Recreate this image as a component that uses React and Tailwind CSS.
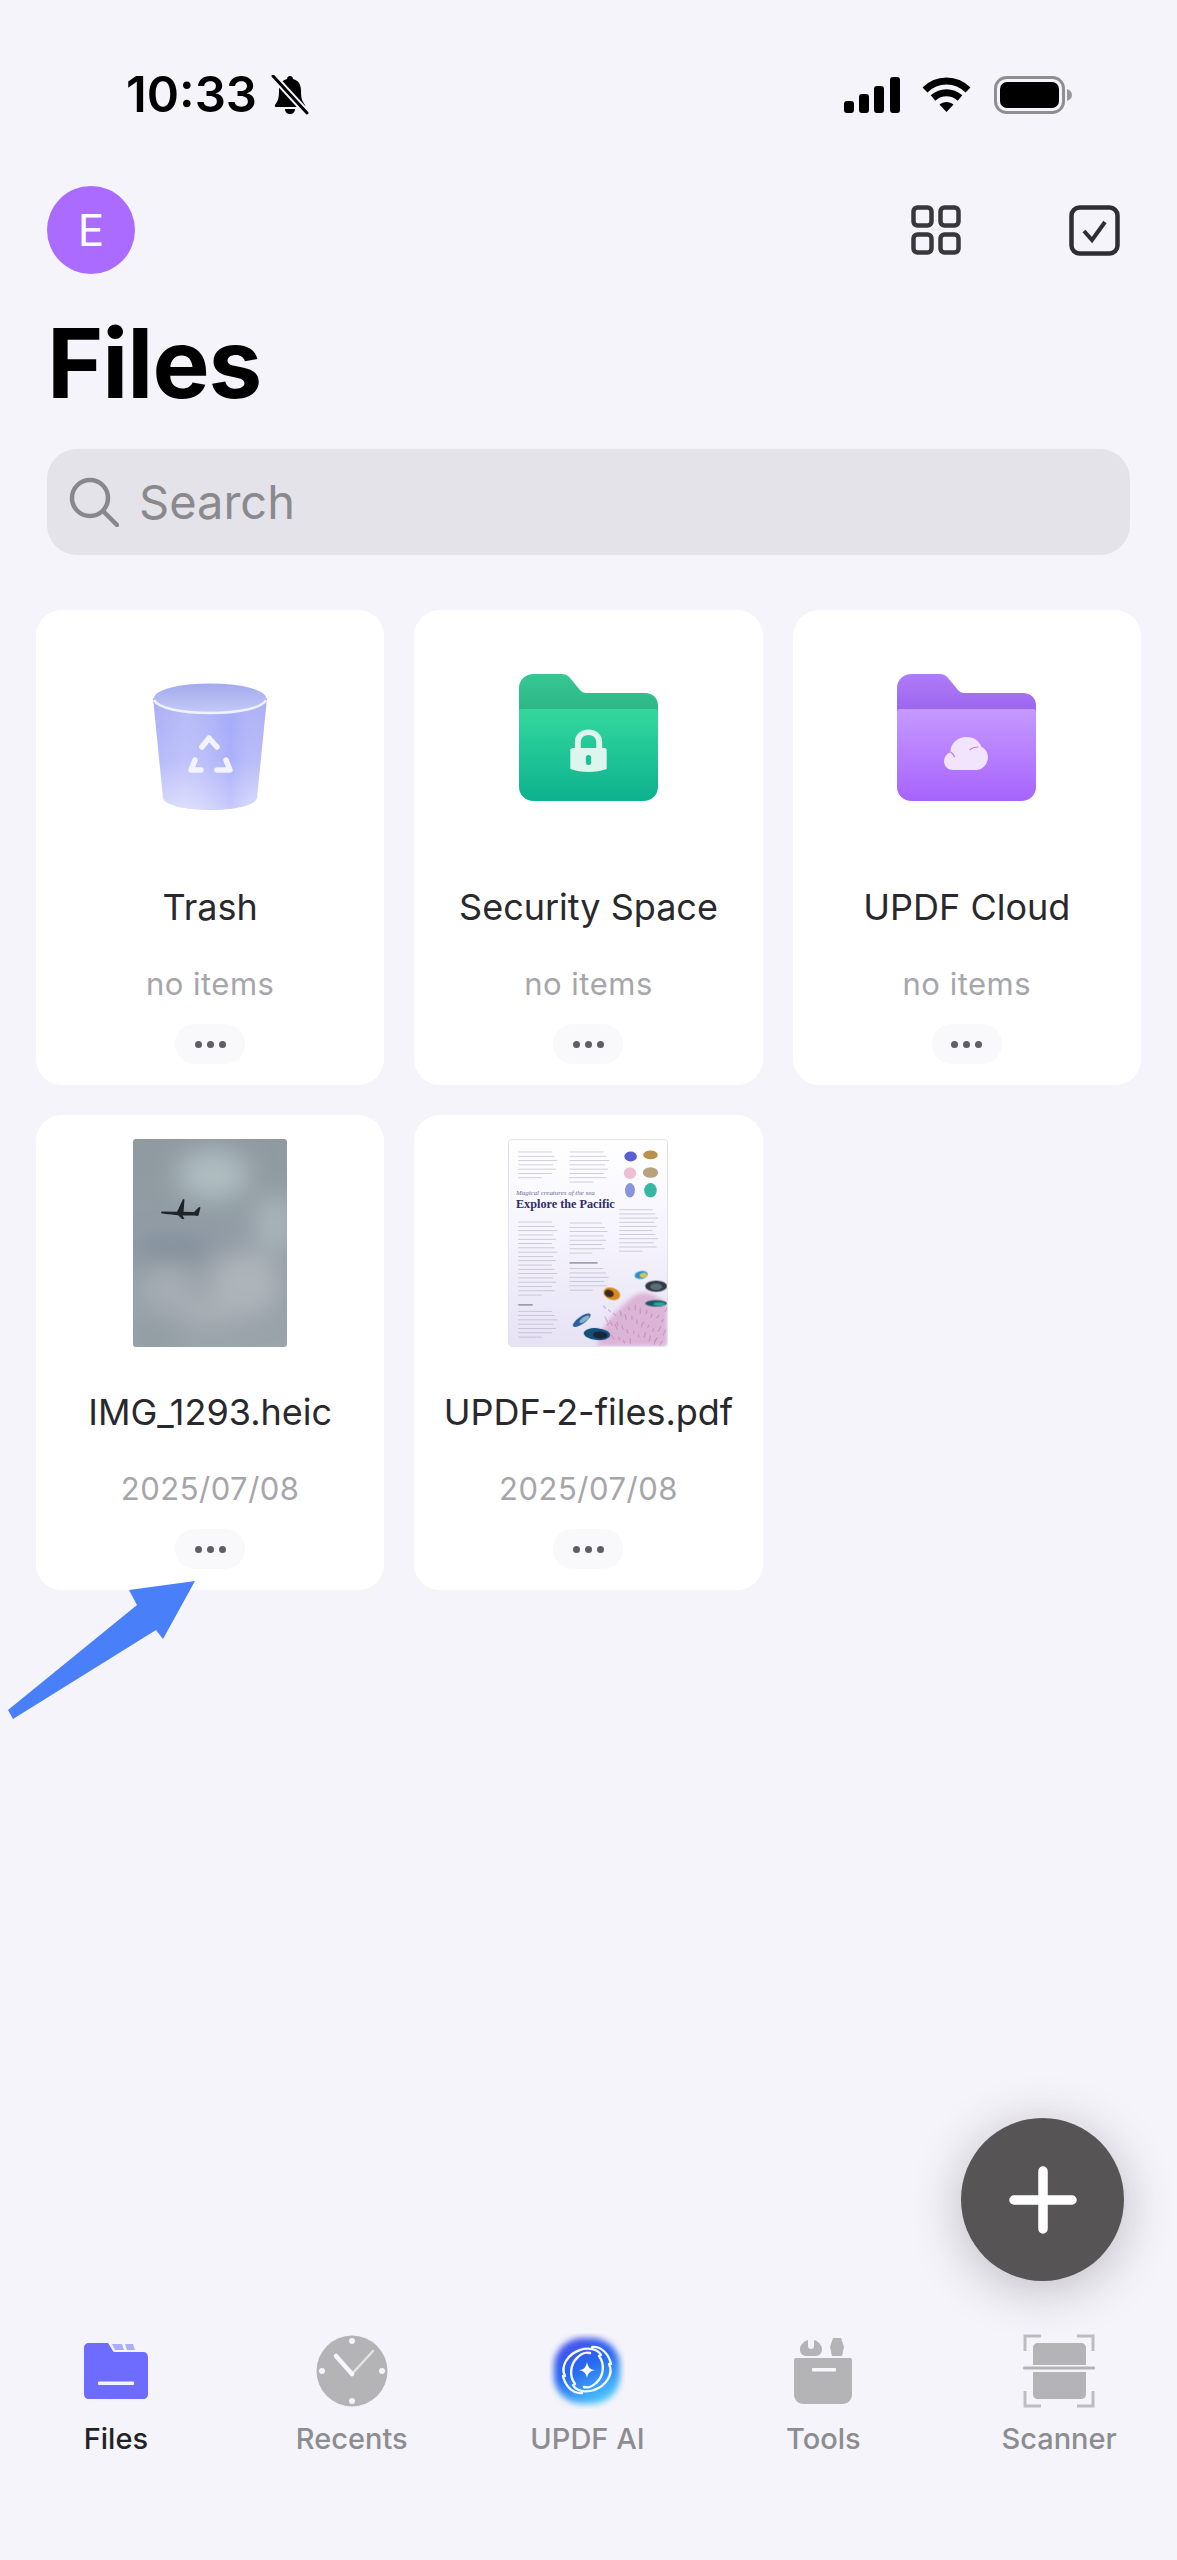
import React from 'react';

function lines(x, y, w, n, gap) {
  return [...Array(n)].map((_, i) => (
    <rect key={`${x}-${y}-${i}`} x={x} y={y + i * gap} width={i === n - 1 ? w * 0.6 : w * (0.86 + ((i * 7) % 5) * 0.035)} height="2.200" fill="#9a9ab2" opacity="0.6" />
  ));
}

function StatusBar() {
  return (
    <div className="flex items-center justify-between h-[40px] mt-[75px] pl-[126px] pr-[105px]">
      <div className="flex items-center gap-[13px]">
        <span className="text-[49px] leading-[40px] font-semibold text-black">10:33</span>
        <svg width="40" height="40" viewBox="0 0 40 40">
          <path d="M20 1c2 0 3 1.500 3 3 6 1.500 8 6 8 12 0 7 1 10 4 14 .6 1 0 2-1 2H6c-1 0-1.600-1-1-2 3-4 4-7 4-14 0-6 2-10.500 8-12 0-1.500 1-3 3-3z" fill="#000" />
          <path d="M15 34h10c0 3-2 5-5 5s-5-2-5-5z" fill="#000" />
          <path d="M3 1l34 37" stroke="#f5f4fa" strokeWidth="7" />
          <path d="M3 1l34 37" stroke="#000" strokeWidth="3" strokeLinecap="round" />
        </svg>
      </div>
      <div className="flex items-center">
        <svg width="56" height="36" viewBox="0 0 56 36" fill="#000">
          <rect x="0" y="24" width="10" height="12" rx="3" />
          <rect x="15" y="17" width="10" height="19" rx="3" />
          <rect x="30" y="9" width="10" height="27" rx="3" />
          <rect x="46" y="0" width="10" height="36" rx="3" />
        </svg>
        <svg className="ml-[22px]" width="49" height="36" viewBox="0 0 49 36" fill="none" stroke="#000" strokeWidth="7">
          <path d="M3 13C15 1 34 1 46 13" />
          <path d="M11 21c8-7 19-7 27 0" />
          <path d="M24.500 35l-7-7.500c4-3.500 10-3.500 14 0z" fill="#000" stroke="none" />
        </svg>
        <svg className="ml-[23px]" width="78" height="38" viewBox="0 0 78 38">
          <rect x="1.500" y="1.500" width="68" height="35" rx="11" fill="none" stroke="#8f8f92" strokeWidth="3" />
          <rect x="6" y="6" width="59" height="26" rx="7" fill="#000" />
          <path d="M73 13c3 1 5 3 5 6s-2 5-5 6z" fill="#98989b" />
        </svg>
      </div>
    </div>
  );
}

function TrashIcon() {
  return (
    <svg width="116" height="128" viewBox="0 0 116 128">
      <defs>
        <linearGradient id="tb" x1="0" y1="0" x2="0" y2="1">
          <stop offset="0" stopColor="#a9aef6" />
          <stop offset="0.55" stopColor="#b5b9f8" />
          <stop offset="1" stopColor="#d8dafb" />
        </linearGradient>
        <linearGradient id="ts" x1="0" y1="0" x2="1" y2="0">
          <stop offset="0" stopColor="#ffffff" stopOpacity="0" />
          <stop offset="0.28" stopColor="#ffffff" stopOpacity="0.14" />
          <stop offset="0.68" stopColor="#8f97ff" stopOpacity="0.25" />
          <stop offset="1" stopColor="#ffffff" stopOpacity="0" />
        </linearGradient>
        <linearGradient id="tr" x1="0" y1="0" x2="0" y2="1">
          <stop offset="0" stopColor="#a3aaee" />
          <stop offset="1" stopColor="#c3c9f6" />
        </linearGradient>
      </defs>
      <path d="M1 16l10 100c1 7 22 12 47 12s46-5 47-12l10-100z" fill="url(#tb)" />
      <path d="M1 16l10 100c1 7 22 12 47 12s46-5 47-12l10-100z" fill="url(#ts)" />
      <ellipse cx="58" cy="16" rx="56" ry="14.500" fill="url(#tr)" />
      <path d="M2 18c4 8 27 13 56 13s52-5 56-13" fill="none" stroke="#f0f1fe" strokeWidth="2.500" />
      <g fill="none" stroke="#f2f3ff" strokeWidth="5.500" strokeLinecap="round" strokeLinejoin="round">
        <path d="M50 65l7-9 8 9" />
        <path d="M43 78l-4 10h10" />
        <path d="M74 78l4 10H65" />
      </g>
    </svg>
  );
}

function Folder({ back1, back2, front1, front2, id, children }) {
  return (
    <svg width="139" height="127" viewBox="0 0 130 127" preserveAspectRatio="none">
      <defs>
        <linearGradient id={`${id}b`} x1="0" y1="0" x2="0" y2="1">
          <stop offset="0" stopColor={back1} />
          <stop offset="1" stopColor={back2} />
        </linearGradient>
        <linearGradient id={`${id}f`} x1="0" y1="0" x2="0" y2="1">
          <stop offset="0" stopColor={front1} />
          <stop offset="1" stopColor={front2} />
        </linearGradient>
      </defs>
      <path d="M0 14C0 6 6 0 14 0h26c3 0 5 1 7 3l10 13c2 2 3 3 6 3h55c7 0 12 5 12 12v10H0z" fill={`url(#${id}b)`} />
      <path d="M0 38c0-2 1-3 3-3h124c2 0 3 1 3 3v75c0 8-6 14-14 14H14c-8 0-14-6-14-14z" fill={`url(#${id}f)`} />
      {children}
    </svg>
  );
}

function SecurityIcon() {
  return (
    <Folder id="sec" back1="#37c793" back2="#2cb585" front1="#34d89d" front2="#0cb18e">
      <path d="M55 76V68c0-13 20-13 20 0v8" fill="none" stroke="#dcf6ee" strokeWidth="5.500" />
      <path d="M48 76c0-1 1-2 2-2h30c1 0 2 1 2 2v19c-10 4-24 4-34 0z" fill="#dcf6ee" />
      <rect x="62.500" y="81" width="5" height="10" rx="2.500" fill="#1fc095" />
    </Folder>
  );
}

function CloudIcon() {
  return (
    <Folder id="cld" back1="#af7cf8" back2="#9963ec" front1="#c59aff" front2="#a763fd">
      <path d="M53 96c-6 0-9-4-9-9 0-4 2-7 6-9 0-9 7-15 15-15 7 0 12 4 14 10 4 2 6 6 6 10 0 7-5 13-11 13z" fill="#f2e4fd" />
      <path d="M50 78c2 1 3 3 4 5M68 76c2-2 5-3 8-3" fill="none" stroke="#b37df8" strokeWidth="1.200" />
    </Folder>
  );
}

function PhotoThumb() {
  return (
    <svg className="rounded-[3px]" width="154" height="208" viewBox="0 0 154 208">
      <defs>
        <linearGradient id="sky" x1="0" y1="0" x2="0" y2="1">
          <stop offset="0" stopColor="#8f9b9f" />
          <stop offset="0.5" stopColor="#919ca6" />
          <stop offset="1" stopColor="#9aa4aa" />
        </linearGradient>
        <filter id="soft" x="-30%" y="-30%" width="160%" height="160%">
          <feGaussianBlur stdDeviation="12" />
        </filter>
      </defs>
      <rect width="154" height="208" fill="url(#sky)" />
      <g filter="url(#soft)">
        <ellipse cx="80" cy="36" rx="36" ry="26" fill="#afbcc0" />
        <ellipse cx="142" cy="85" rx="22" ry="30" fill="#a8b3b9" />
        <ellipse cx="40" cy="110" rx="40" ry="10" fill="#808c98" />
        <ellipse cx="112" cy="145" rx="36" ry="32" fill="#aeb5ba" />
        <ellipse cx="35" cy="150" rx="28" ry="22" fill="#a6aeb4" />
        <ellipse cx="75" cy="174" rx="32" ry="12" fill="#abb2b7" />
        <ellipse cx="20" cy="198" rx="28" ry="10" fill="#8f99a1" />
      </g>
      <g fill="#1f2429">
        <path d="M28 73.500c0-.8 1-1 2-1l31 .5 5-5 1.500.5-2 8c-1 .5-2 .5-4 0-10 .5-24-.8-32-2-1 0-1.500-.5-1.500-1z" />
        <path d="M44 73l6-13 1.500.5-1 13zM44 75l5 5h2.500l-3-5.500z" />
      </g>
    </svg>
  );
}

const CORALS = [
  { x: 605, y: 105, rx: 19, ry: 15, fill: '#5a5fd0' },
  { x: 665, y: 100, rx: 22, ry: 13, fill: '#b8924a' },
  { x: 603, y: 155, rx: 19, ry: 18, fill: '#ebc0d5' },
  { x: 665, y: 153, rx: 23, ry: 16, fill: '#b7a27c' },
  { x: 603, y: 207, rx: 15, ry: 22, fill: '#8a94dc' },
  { x: 665, y: 207, rx: 19, ry: 22, fill: '#35b8a3' },
];
const FISH = [
  { x: 637, y: 463, rx: 20, ry: 12, a: '#2f8fc4', b: '#d5c64a', r: -10, dx: 6 },
  { x: 682, y: 497, rx: 33, ry: 17, a: '#2f3a46', b: '#5d6c75', r: 0, dx: 0 },
  { x: 682, y: 549, rx: 33, ry: 10, a: '#1f5a63', b: '#2aa49c', r: 0, dx: 10 },
  { x: 548, y: 520, rx: 26, ry: 18, a: '#d88a1f', b: '#3a2a20', r: 20, dx: -8 },
  { x: 457, y: 600, rx: 32, ry: 11, a: '#2a5f9a', b: '#8cb3d0', r: -35, dx: 8 },
  { x: 503, y: 642, rx: 40, ry: 18, a: '#134f7a', b: '#16283a', r: 5, dx: 10 },
];
const CORAL_STROKES = [...Array(40)].map((_, i) => {
  const x = 530 + ((i * 37) % 180);
  const y = 565 + ((i * 53) % 112);
  return `M${x} ${y}l${(i % 5) * 4 - 8} ${-9 - (i % 3) * 4}`;
});

function PdfThumb() {
  return (
    <svg className="rounded-[4px] border border-[#e3e1ec]" width="160" height="208" viewBox="237 55 478 623">
      <defs>
        <linearGradient id="pg" x1="0" y1="0" x2="0" y2="1">
          <stop offset="0" stopColor="#ffffff" />
          <stop offset="0.5" stopColor="#f5f3fc" />
          <stop offset="1" stopColor="#e6e2f5" />
        </linearGradient>
        <filter id="fuzzy">
          <feGaussianBlur stdDeviation="6" />
        </filter>
        <filter id="tiny">
          <feGaussianBlur stdDeviation="2" />
        </filter>
      </defs>
      <rect x="237" y="55" width="478" height="623" fill="url(#pg)" />
      {lines(265, 90, 118, 7, 13)}
      {lines(420, 90, 120, 8, 13)}
      {lines(265, 302, 118, 18, 13)}
      {lines(420, 305, 115, 8, 13)}
      {lines(570, 265, 118, 11, 12.500)}
      {lines(420, 443, 118, 6, 13)}
      {lines(265, 572, 118, 7, 13)}
      <rect x="420" y="425" width="85" height="3.500" fill="#77778f" />
      <rect x="265" y="552" width="44" height="3.500" fill="#77778f" />
      <text x="258" y="220" fontFamily="'Liberation Serif', serif" fontStyle="italic" fontSize="21" fill="#6a6a92">Magical creatures of the sea</text>
      <text x="258" y="261" fontFamily="'Liberation Serif', serif" fontWeight="700" fontSize="37" fill="#2f2d6b">Explore the Pacific</text>
      <g filter="url(#tiny)">
        {CORALS.map(c => <ellipse key={c.x + '-' + c.y} cx={c.x} cy={c.y} rx={c.rx} ry={c.ry} fill={c.fill} />)}
      </g>
      <path d="M505 678c10-60 50-100 90-135 20-20 40-30 60-25 30 8 60 30 60 40v120z" fill="#dcb4d6" filter="url(#fuzzy)" />
      <g filter="url(#tiny)" stroke="#a9639f" strokeWidth="3.500" opacity="0.4">
        {CORAL_STROKES.map(d => <path key={d} d={d} />)}
      </g>
      <g filter="url(#tiny)">
        {FISH.map(f => (
          <g key={f.x + '-' + f.y} transform={`rotate(${f.r} ${f.x} ${f.y})`}>
            <ellipse cx={f.x} cy={f.y} rx={f.rx} ry={f.ry} fill={f.a} />
            <ellipse cx={f.x + f.dx} cy={f.y + 2} rx={f.rx * 0.55} ry={f.ry * 0.6} fill={f.b} />
          </g>
        ))}
      </g>
    </svg>
  );
}

const CARDS = [
  { name: 'Trash', sub: 'no items', icon: <TrashIcon />, top: 'pt-[72px]', h: 'h-[127px]' },
  { name: 'Security Space', sub: 'no items', icon: <SecurityIcon />, top: 'pt-[64px]', h: 'h-[135px]' },
  { name: 'UPDF Cloud', sub: 'no items', icon: <CloudIcon />, top: 'pt-[64px]', h: 'h-[135px]' },
  { name: 'IMG_1293.heic', sub: '2025/07/08', icon: <PhotoThumb />, top: 'pt-[24px]', h: 'h-[175px]' },
  { name: 'UPDF-2-files.pdf', sub: '2025/07/08', icon: <PdfThumb />, top: 'pt-[24px]', h: 'h-[175px]' },
];

function Card({ card }) {
  return (
    <div className={`bg-white rounded-[26px] h-[475px] flex flex-col items-center ${card.top}`}>
      <div className={`${card.h} flex justify-center`}>{card.icon}</div>
      <div className="mt-[74px] h-[48px] leading-[48px] text-[36px] text-[#29292d] whitespace-nowrap">{card.name}</div>
      <div className="mt-[33px] h-[40px] leading-[40px] text-[31px] text-[#a6a6aa] tracking-[0.5px]">{card.sub}</div>
      <div className="mt-[20px] w-[70px] h-[40px] rounded-[20px] bg-[#f9f8fb] flex items-center justify-center gap-[5px]">
        <span className="w-[7px] h-[7px] rounded-full bg-[#5f5f63]" />
        <span className="w-[7px] h-[7px] rounded-full bg-[#5f5f63]" />
        <span className="w-[7px] h-[7px] rounded-full bg-[#5f5f63]" />
      </div>
    </div>
  );
}

function FilesTab() {
  return (
    <svg width="64" height="56" viewBox="0 0 64 56">
      <path d="M0 5c0-3 2-5 5-5h19l5 8c.6 1 1 1 2 1h28c3 0 5 2 5 5v37c0 3-2 5-5 5H5c-3 0-5-2-5-5z" fill="#6e6cff" />
      <path d="M28 1h10l2 6H31zM41 1h8l2 6H43z" fill="#aeadfb" />
      <rect x="14" y="38.500" width="36" height="3.500" rx="1" fill="#f3f3ff" />
    </svg>
  );
}

function ClockTab() {
  return (
    <svg width="72" height="72" viewBox="0 0 72 72">
      <circle cx="36" cy="36" r="35.500" fill="#b4b4b6" />
      <path d="M36 39L57 16" stroke="#e2e2e4" strokeWidth="2.500" strokeLinecap="round" />
      <path d="M20 21l16 18" stroke="#f7f6fb" strokeWidth="4.500" strokeLinecap="round" />
      <g fill="#f5f4fa">
        <circle cx="36" cy="6" r="3" />
        <circle cx="36" cy="66" r="3" />
        <circle cx="6" cy="36" r="3" />
        <circle cx="66" cy="36" r="3" />
      </g>
    </svg>
  );
}

function AiTab() {
  return (
    <svg width="76" height="76" viewBox="-3 -3 76 76">
      <defs>
        <linearGradient id="ai" x1="0.2" y1="0" x2="0.7" y2="1">
          <stop offset="0" stopColor="#4a50ea" />
          <stop offset="0.45" stopColor="#2667f2" />
          <stop offset="1" stopColor="#4fcdfc" />
        </linearGradient>
        <filter id="aiblur" x="-15%" y="-15%" width="130%" height="130%">
          <feGaussianBlur stdDeviation="3" />
        </filter>
      </defs>
      <rect x="2" y="2" width="66" height="66" rx="28" fill="url(#ai)" filter="url(#aiblur)" />
      <g fill="none" stroke="#f4f8ff" strokeWidth="2.400" strokeLinecap="round">
        <path d="M13 40C8 30 16 18 28 14c8-3 18-1 21 5" />
        <path d="M57 28c5 10-3 22-15 26-8 3-18 1-21-5" />
        <path d="M30 57c-10 1-17-8-19-17" />
        <path d="M40 11c10-1 17 8 19 17" />
        <path d="M23 48c-6-8-5-20 3-27 4-4 9-5 12-4" />
        <path d="M47 20c6 8 5 20-3 27-4 4-9 5-12 4" />
      </g>
      <path d="M35 26c1 5 3 8 8 8-5 1-7 3-8 8-1-5-3-7-8-8 5 0 7-3 8-8z" fill="#fff" />
    </svg>
  );
}

function ToolsTab() {
  return (
    <svg width="60" height="66" viewBox="0 0 60 66">
      <path d="M1 22c0-1 .5-2 2-2h54c1.500 0 2 1 2 2v34c0 6-4 10-10 10H11C5 66 1 62 1 56z" fill="#b4b4b6" />
      <rect x="19" y="30" width="24" height="3.500" rx="1" fill="#f8f7fc" />
      <path d="M15 2v6c0 4 6 4 6 0V2c4 1 8 5 8 9 0 4-2 6-5 7H12c-3-1-5-3-5-7 0-4 4-8 8-9z" fill="#b4b4b6" />
      <path d="M40 0h8l3 9-2 9H39l-2-9z" fill="#b4b4b6" />
    </svg>
  );
}

function ScannerTab() {
  return (
    <svg width="72" height="74" viewBox="0 0 72 74">
      <g fill="none" stroke="#bdbdc0" strokeWidth="3">
        <path d="M2 17V2h16M70 17V2H54M2 57v15h16M70 57v15H54" />
      </g>
      <path d="M10 31V14c0-3 2-5 5-5h43c3 0 5 2 5 5v17z" fill="#b4b4b6" />
      <rect x="0" y="32.500" width="72" height="3" rx="1" fill="#b4b4b6" />
      <path d="M10 38h53v22c0 3-2 5-5 5H15c-3 0-5-2-5-5z" fill="#b4b4b6" />
    </svg>
  );
}

const TABS = [
  { label: 'Files', icon: <FilesTab />, color: 'text-[#232326]' },
  { label: 'Recents', icon: <ClockTab />, color: 'text-[#8d8d91]' },
  { label: 'UPDF AI', icon: <AiTab />, color: 'text-[#8d8d91]' },
  { label: 'Tools', icon: <ToolsTab />, color: 'text-[#8d8d91]' },
  { label: 'Scanner', icon: <ScannerTab />, color: 'text-[#8d8d91]' },
];

export default function App() {
  return (
    <div className="relative w-full h-[2560px] overflow-hidden flex flex-col bg-[#f5f4fa] font-['Inter',sans-serif]">
      <StatusBar />

      <div className="flex items-center justify-between mt-[71px] pl-[47px] pr-[57px]">
        <div className="w-[88px] h-[88px] rounded-full bg-[#ab6bff] flex items-center justify-center text-white text-[44px]">E</div>
        <div className="flex items-center gap-[108px]">
          <svg width="50" height="50" viewBox="0 0 50 50" fill="none" stroke="#38383c" strokeWidth="4.500">
            <rect x="2.500" y="2.500" width="18" height="18" rx="4" />
            <rect x="29.500" y="2.500" width="18" height="18" rx="4" />
            <rect x="2.500" y="29.500" width="18" height="18" rx="4" />
            <rect x="29.500" y="29.500" width="18" height="18" rx="4" />
          </svg>
          <svg width="51" height="51" viewBox="0 0 51 51" fill="none" stroke="#2f2f33">
            <rect x="2.500" y="2.500" width="46" height="46" rx="8" strokeWidth="4.500" />
            <path d="M15 26l8 9 13-18" strokeWidth="4" />
          </svg>
        </div>
      </div>

      <h1 className="mt-[34px] ml-[47px] text-[96px] leading-[110px] font-bold text-black tracking-[-1px]">Files</h1>

      <div className="mt-[31px] mx-[47px] h-[106px] rounded-[30px] bg-[#e4e3e9] flex items-center pl-[22px]">
        <svg width="50" height="50" viewBox="0 0 50 50" fill="none" stroke="#88888c" strokeWidth="4.500" strokeLinecap="round">
          <circle cx="21" cy="21" r="18" />
          <path d="M34 34l14 14" />
        </svg>
        <span className="ml-[20px] text-[47px] text-[#8a8a8e]">Search</span>
      </div>

      <div className="mt-[55px] px-[36px] grid grid-cols-3 gap-[30px]">
        {CARDS.map(c => <Card key={c.name} card={c} />)}
      </div>

      <nav className="mt-auto mb-[101px] -ml-[2px] grid grid-cols-5">
        {TABS.map(t => (
          <div key={t.label} className="flex flex-col items-center">
            <div className="h-[76px] flex items-center justify-center">{t.icon}</div>
            <span className={`mt-[10px] h-[40px] leading-[40px] text-[29px] font-medium ${t.color}`}>{t.label}</span>
          </div>
        ))}
      </nav>

      <button className="absolute left-[961px] top-[2118px] w-[163px] h-[163px] rounded-full bg-[#575456] flex items-center justify-center shadow-[0_8px_50px_rgba(60,55,70,0.3)]">
        <svg width="68" height="68" viewBox="0 0 68 68" stroke="#fff" strokeWidth="9.500" strokeLinecap="round">
          <path d="M34 5v58M5 34h58" />
        </svg>
      </button>

      <svg className="absolute left-0 top-[1570px]" width="210" height="160" viewBox="0 1570 210 160">
        <path d="M8 1710l5 9 143-89 7 9 32-58-66 9 8 15z" fill="#4a7ffa" />
      </svg>
    </div>
  );
}
